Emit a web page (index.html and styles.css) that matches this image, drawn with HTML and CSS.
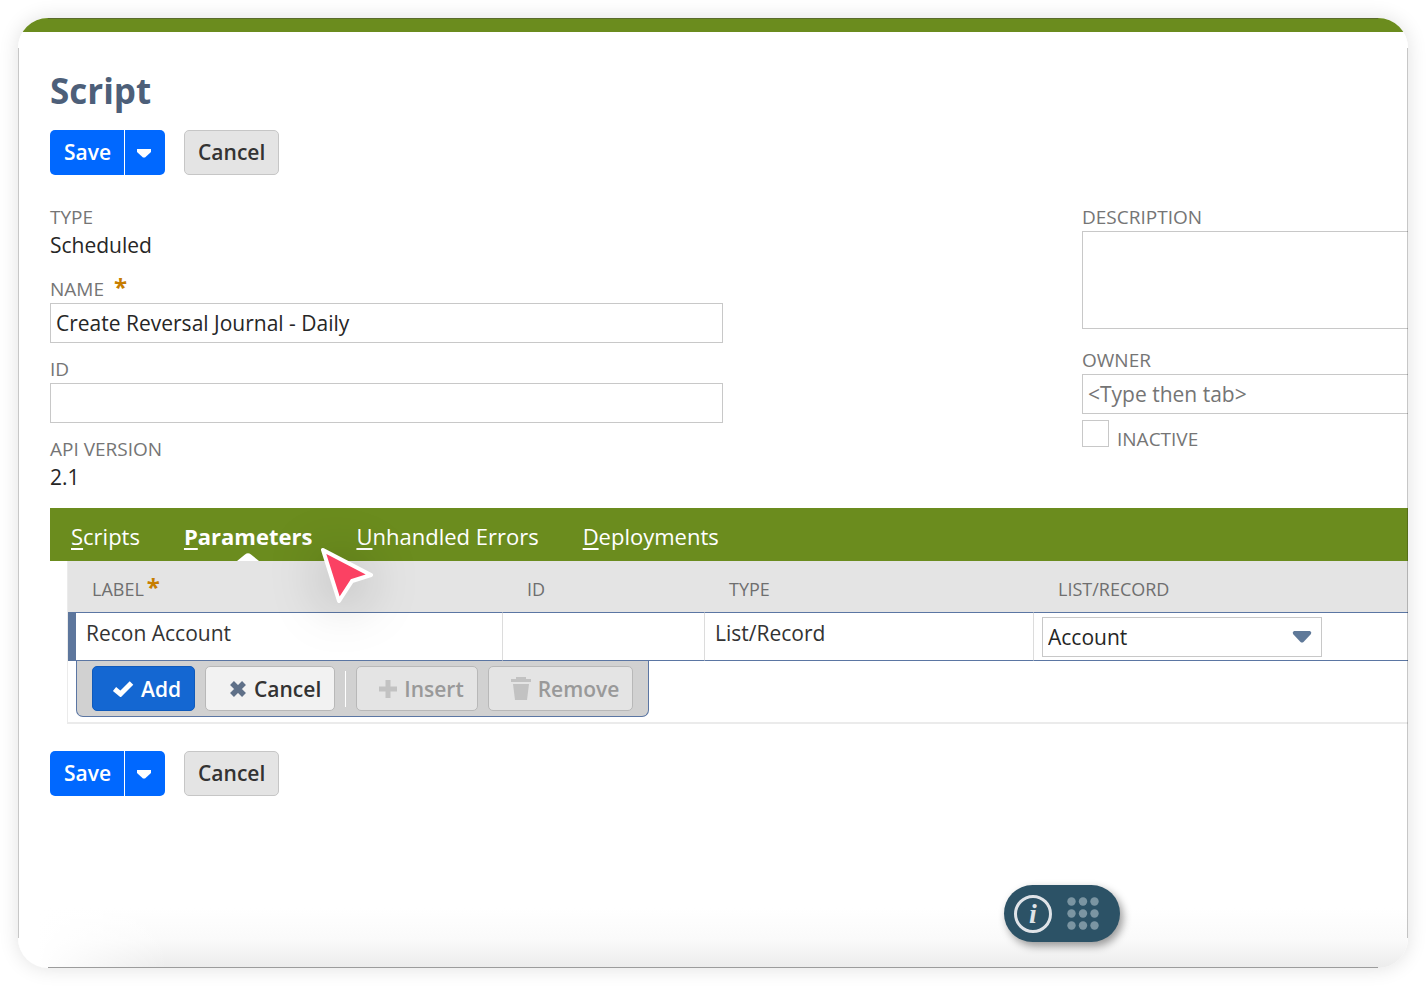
FILE: index.html
```html
<!DOCTYPE html>
<html lang="en">
<head>
<meta charset="utf-8">
<title>Script</title>
<link rel="stylesheet" href="styles.css">
</head>
<body>
<main class="card">
  <div class="topbar"></div>
  <div class="content">
    <h1 class="title">Script</h1>
    <div class="actions">
      <div class="split">
        <button class="btn primary" type="button">Save</button>
        <button class="btn primary more" type="button" aria-label="More save options"><svg width="14" height="9" viewBox="0 0 14 9"><path d="M0 0H14V3L8 8.500H6L0 3Z" fill="#fff"/></svg></button>
      </div>
      <button class="btn" type="button">Cancel</button>
    </div>

    <form class="fields">
      <div class="column">
        <div class="field">
          <span class="label">TYPE</span>
          <span class="value">Scheduled</span>
        </div>
        <div class="field">
          <label class="label" for="name">NAME <span class="required spaced">*</span></label>
          <input class="input" id="name" type="text" value="Create Reversal Journal - Daily">
        </div>
        <div class="field">
          <label class="label" for="script-id">ID</label>
          <input class="input" id="script-id" type="text">
        </div>
        <div class="field">
          <span class="label">API VERSION</span>
          <span class="value">2.1</span>
        </div>
      </div>
      <div class="column side">
        <div class="field">
          <label class="label" for="description">DESCRIPTION</label>
          <textarea class="input area" id="description"></textarea>
        </div>
        <div class="field">
          <label class="label" for="owner">OWNER</label>
          <input class="input" id="owner" type="text" placeholder="&lt;Type then tab&gt;">
          <div class="check">
            <input class="box" id="inactive" type="checkbox">
            <label class="label" for="inactive">INACTIVE</label>
          </div>
        </div>
      </div>
    </form>

    <nav class="tabs">
      <button class="tab" type="button"><u>S</u>cripts</button>
      <button class="tab active" type="button"><u>P</u>arameters<svg class="notch" width="22" height="8" viewBox="0 0 22 8"><path d="M0 8L8 1.500Q11 -1 14 1.500L22 8Z" fill="#fff"/></svg></button>
      <button class="tab" type="button"><u>U</u>nhandled Errors</button>
      <button class="tab" type="button"><u>D</u>eployments</button>
      <svg class="pointer" width="62" height="66" viewBox="0 0 62 66"><path d="M8 8L56 33L37 39L24 59Z" fill="#fb4163" stroke="#fff" stroke-width="4" stroke-linejoin="round"/></svg>
    </nav>

    <section class="panel">
      <table class="grid">
        <colgroup><col class="c-label"><col class="c-id"><col class="c-type"><col></colgroup>
        <thead>
          <tr><th>LABEL<span class="required near">*</span></th><th>ID</th><th>TYPE</th><th>LIST/RECORD</th></tr>
        </thead>
        <tbody>
          <tr>
            <td>Recon Account</td>
            <td></td>
            <td>List/Record</td>
            <td class="choice">
              <div class="picker">
                <select class="input" aria-label="List/Record"><option>Account</option></select>
                <svg class="caret" width="20" height="12" viewBox="0 0 20 12"><path d="M2 0H18Q20 1 19 3L11.500 11Q10 12 8.500 11L1 3Q0 1 2 0Z" fill="#5f7999"/></svg>
              </div>
            </td>
          </tr>
        </tbody>
      </table>
      <div class="toolbar">
        <button class="btn tool add" type="button"><svg width="22" height="17" viewBox="0 0 22 17"><path d="M2.500 9L8.500 14L19.500 3" fill="none" stroke="#fff" stroke-width="5"/></svg>Add</button>
        <button class="btn tool cancel" type="button"><svg width="18" height="16" viewBox="0 0 18 16"><path d="M3 2L15 14M15 2L3 14" stroke="#5f7088" stroke-width="5.500"/></svg>Cancel</button>
        <span class="divider"></span>
        <button class="btn tool insert" type="button" disabled><svg width="18" height="18" viewBox="0 0 18 18"><path d="M9 0V18M0 9H18" stroke="#c2c2c2" stroke-width="5"/></svg>Insert</button>
        <button class="btn tool remove" type="button" disabled><svg width="20" height="23" viewBox="0 0 20 23"><path d="M0 2H5V0H15V2H20V5H0ZM2 7H18L16 23H4Z" fill="#c2c2c2"/></svg>Remove</button>
      </div>
    </section>

    <div class="actions">
      <div class="split">
        <button class="btn primary" type="button">Save</button>
        <button class="btn primary more" type="button" aria-label="More save options"><svg width="14" height="9" viewBox="0 0 14 9"><path d="M0 0H14V3L8 8.500H6L0 3Z" fill="#fff"/></svg></button>
      </div>
      <button class="btn" type="button">Cancel</button>
    </div>
  </div>

  <div class="widget">
    <button class="info" type="button" aria-label="Information">i</button>
    <svg width="32" height="33" viewBox="0 0 32 33" fill="#7b95a2"><circle cx="4.500" cy="4.500" r="4.200"/><circle cx="16" cy="4.500" r="4.200"/><circle cx="27.500" cy="4.500" r="4.200"/><circle cx="4.500" cy="16.500" r="4.200"/><circle cx="16" cy="16.500" r="4.200"/><circle cx="27.500" cy="16.500" r="4.200"/><circle cx="4.500" cy="28.500" r="4.200"/><circle cx="16" cy="28.500" r="4.200"/><circle cx="27.500" cy="28.500" r="4.200"/></svg>
  </div>
</main>
</body>
</html>
```
FILE: styles.css
```css
* {
  box-sizing: border-box;
}

body {
  margin: 0;
  padding: 18px;
  background: #fff;
  font-family: "Open Sans", "Noto Sans", sans-serif;
  font-size: 21px;
  color: #262626;
}

button,
input,
select,
textarea {
  font: inherit;
  color: inherit;
}

.card {
  position: relative;
  min-height: calc(100vh - 36px);
  overflow: hidden;
  border-radius: 30px;
  background: linear-gradient(to top, #ececec, #fafafa 28px, #fff 60px);
  box-shadow: 0 0 20px rgba(0, 0, 0, 0.12);
}

/* Hairlines on the straight parts of the edge only */
.card::after {
  content: "";
  position: absolute;
  inset: 0;
  pointer-events: none;
  background:
    linear-gradient(#5a6b2c, #5a6b2c) center top / calc(100% - 60px) 1px no-repeat,
    linear-gradient(#9c9c9c, #9c9c9c) center bottom / calc(100% - 60px) 1px no-repeat,
    linear-gradient(#00000038, #00000038) left center / 1px calc(100% - 60px) no-repeat,
    linear-gradient(#00000038, #00000038) right center / 1px calc(100% - 60px) no-repeat;
}

/* Keeps the lower left corner lighter than the bottom shade */
.card::before {
  content: "";
  position: absolute;
  left: 0;
  bottom: 0;
  width: 150px;
  height: 60px;
  background: linear-gradient(to right, #fff 20px, #fff0);
}

.topbar {
  height: 14px;
  background: #6b8c1e;
}

.content {
  padding: 35px 0 0 32px;
}

.title {
  margin: 0 0 15px;
  font-size: 35px;
  line-height: 48px;
  font-weight: 700;
  color: #4d5f79;
}

.actions {
  display: flex;
  gap: 19px;
}

.split {
  display: flex;
  gap: 1px;
}

.btn {
  height: 45px;
  padding: 0 13px 1px;
  border: 1px solid #c6c6c6;
  border-radius: 5px;
  background: #e4e4e4;
  font-weight: 600;
  color: #333;
}

.primary {
  border: 0;
  border-radius: 5px 0 0 5px;
  padding: 0 13px 1px 14px;
  background: #0068ff;
  color: #fff;
}

.more {
  display: flex;
  align-items: center;
  border-radius: 0 5px 5px 0;
  padding: 2px 14px 0 12px;
}

.fields {
  display: flex;
  justify-content: space-between;
  margin: 29px 0 13px;
}

.column {
  display: flex;
  flex-direction: column;
  gap: 13px;
  flex: 0 1 673px;
}

.side {
  flex: 0 0 326px;
  gap: 18px;
}

.field {
  display: flex;
  flex-direction: column;
}

.label {
  font-size: 19px;
  line-height: 27px;
  color: #757575;
}

.value {
  line-height: 28px;
  padding-bottom: 4px;
}

.required {
  font-size: 24px;
  line-height: 20px;
  font-weight: 700;
  color: #c77d00;
}

.spaced {
  margin-left: 5px;
}

.near {
  margin-left: 3px;
}

.input {
  width: 100%;
  height: 40px;
  margin: 0;
  padding: 0 5px;
  border: 1px solid #c8c8c8;
  border-radius: 0;
  background: #fff;
  appearance: none;
}

.input::placeholder {
  color: #757575;
}

.area {
  height: 98px;
  resize: none;
}

.side .input {
  border-right: 0;
}

.check {
  display: flex;
  gap: 8px;
  margin-top: 6px;
}

.check .label {
  padding-top: 6px;
}

.box {
  width: 27px;
  height: 27px;
  margin: 0;
  border: 1px solid #c8c8c8;
  background: #fff;
  appearance: none;
}

.tabs {
  position: relative;
  display: flex;
  gap: 2px;
  height: 53px;
  background: #6b8c1e;
}

.tab {
  position: relative;
  padding: 3px 21px 0;
  border: 0;
  background: none;
  font-size: 22px;
  color: #fff;
}

.tab u {
  text-decoration-thickness: 2px;
  text-underline-offset: 3px;
}

.active {
  font-weight: 700;
}

.notch {
  position: absolute;
  left: calc(50% - 11px);
  bottom: 0;
}

.pointer {
  position: absolute;
  left: 265px;
  top: 34px;
  z-index: 1;
  filter: drop-shadow(0 6px 26px rgba(0, 0, 0, 0.3));
}

.panel {
  margin: 0 0 27px 17px;
  padding-bottom: 5px;
  border-left: 1px solid #ebebeb;
  border-bottom: 2px solid #ebebeb;
}

.grid {
  width: 100%;
  table-layout: fixed;
  border-collapse: separate;
  border-spacing: 0;
}

.c-label {
  width: 435px;
}

.c-id {
  width: 202px;
}

.c-type {
  width: 329px;
}

.grid th {
  height: 51px;
  padding: 5px 24px 0;
  background: #e4e4e4;
  text-align: left;
  font-size: 18px;
  line-height: 24px;
  font-weight: 400;
  color: #6f6f6f;
}

.grid td {
  height: 49px;
  padding: 0 10px 8px;
  border: solid #5b76a3;
  border-width: 1px 0;
  border-right: 1px solid #dcdcdc;
  background: #fff;
  color: #333;
}

.grid td:first-child {
  border-left: 8px solid #5d769c;
}

.grid .choice {
  padding: 0 8px;
  border-right: 0;
}

.picker {
  position: relative;
  width: 280px;
}

.picker .input {
  display: block;
  color: #262626;
}

.caret {
  position: absolute;
  right: 10px;
  top: 14px;
  pointer-events: none;
}

.toolbar {
  display: flex;
  align-items: center;
  gap: 10px;
  width: fit-content;
  height: 56px;
  margin-left: 8px;
  padding: 0 15px;
  border: 1px solid #5b76a3;
  border-top: 0;
  border-radius: 0 0 7px 7px;
  background: #d1d1d1;
}

.tool {
  display: flex;
  align-items: center;
  gap: 7px;
  padding-bottom: 0;
  border-color: #b8b8b8;
  background: #f2f2f2;
}

.add {
  padding-left: 19px;
  border-color: #0f5abb;
  background: #1467d2;
  color: #fff;
}

.cancel {
  padding-left: 23px;
}

.insert {
  padding-left: 22px;
}

.remove {
  padding-left: 22px;
}

.tool:disabled {
  background: #e4e4e4;
  color: #999;
}

.divider {
  width: 1px;
  height: 36px;
  background: #fff;
}

.widget {
  position: absolute;
  right: 288px;
  bottom: 26px;
  display: flex;
  align-items: center;
  gap: 15px;
  height: 57px;
  padding: 0 21px 0 10px;
  border-radius: 29px;
  background: #2c5266;
  box-shadow: 3px 4px 8px rgba(0, 0, 0, 0.4);
}

.info {
  width: 38px;
  height: 38px;
  padding: 0;
  border: 3px solid #dfe3e8;
  border-radius: 50%;
  background: none;
  font: italic 700 28px/28px "Liberation Serif", serif;
  color: #dfe3e8;
}
```
